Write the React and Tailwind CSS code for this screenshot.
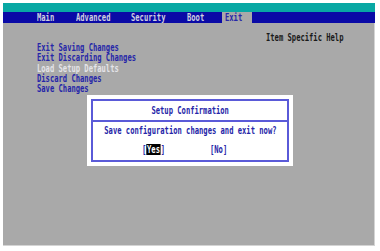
const mono = "font-['DejaVu_Sans_Mono',monospace] text-[10px] leading-[10px] whitespace-pre font-bold"

function T({ children, className = '', center = false }) {
  return (
    <span className={`inline-block scale-x-[0.715] ${center ? 'origin-center' : 'origin-left'} ${className}`}>
      {children}
    </span>
  )
}

export default function App() {
  const items = ['Exit Saving Changes', 'Exit Discarding Changes', 'Load Setup Defaults', 'Discard Changes', 'Save Changes']

  return (
    <div className={`w-[380px] h-[251px] bg-white pt-[3px] pl-[3px] ${mono}`}>
      <div className="w-[372px]">
        <div className="h-[9px] bg-[#08a8a4]" />
        <div className="h-[11px] bg-[#0a0aa6] flex items-center pl-[34px] text-[#cfcfe0]">
          <div className="w-[39px] shrink-0"><T>Main</T></div>
          <div className="w-[55px] shrink-0"><T>Advanced</T></div>
          <div className="w-[56px] shrink-0"><T>Security</T></div>
          <div className="w-[35px] shrink-0"><T>Boot</T></div>
          <div className="w-[30px] h-full shrink-0 bg-[#a9a9a9] pl-[3px] flex items-center text-[#2626a8]"><T>Exit</T></div>
        </div>
        <div className="relative h-[223px] bg-[#a9a9a9] border-r border-b border-[#d4d4d4] flex">
          <div className="w-[263px] shrink-0 pl-[34px] pt-[20px]">
            {items.map((t, i) => (
              <div key={t} className={`h-[10.25px] ${i === 2 ? 'text-[#e4e4e8]' : 'text-[#2626a8]'}`}>
                <T>{t}</T>
              </div>
            ))}
          </div>
          <div className="pt-[10px] text-[#1a1a1a]">
            <T>Item Specific Help</T>
          </div>

          <div className="absolute left-[84px] top-[72px] w-[206px] h-[71px] bg-white p-[4px]">
            <div className="h-full border-2 border-[#5a5ad8] flex flex-col text-[#2626a8]">
              <div className="h-[21px] border-b-2 border-[#5a5ad8] flex items-center justify-center pt-[1px]">
                <T center>Setup Confirmation</T>
              </div>
              <div className="flex justify-center pt-[4px]">
                <T center>Save configuration changes and exit now?</T>
              </div>
              <div className="flex pt-[9px] pl-[49px]">
                <div className="w-[68px] shrink-0">
                  <T>[<span className="bg-black text-white px-[1px]">Yes</span>]</T>
                </div>
                <T>[No]</T>
              </div>
            </div>
          </div>
        </div>
      </div>
    </div>
  )
}
